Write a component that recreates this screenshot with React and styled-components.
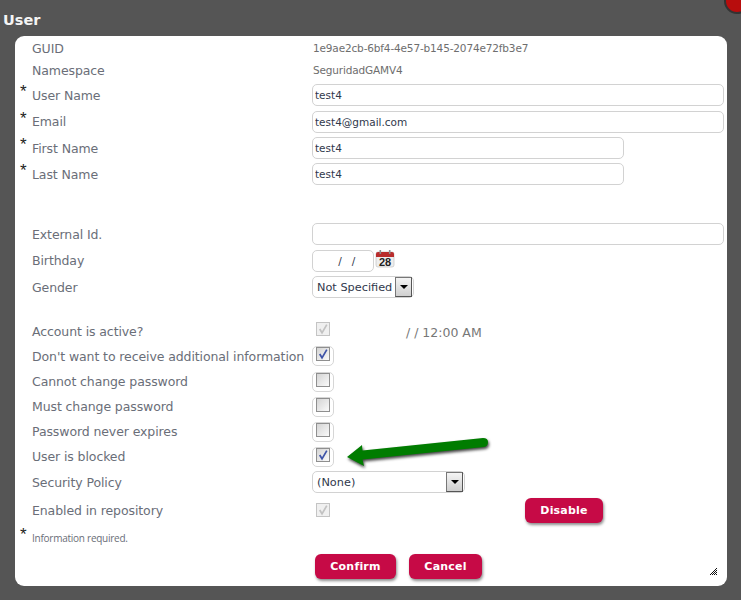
import React from "react";
import styled, { createGlobalStyle } from "styled-components";

const Global = createGlobalStyle`
  html, body { margin: 0; padding: 0; background: #555555; }
  body { width: 741px; height: 600px; overflow: hidden; }
`;

const font = `"DejaVu Sans", Verdana, sans-serif`;

const Page = styled.div`
  position: relative;
  width: 741px;
  height: 600px;
  background: #555555;
  font-family: ${font};
  overflow: hidden;
`;
const Title = styled.h1`
  margin: 0;
  height: 36px;
  padding: 11px 0 0 3px;
  box-sizing: border-box;
  font-size: 14.5px;
  line-height: 18px;
  font-weight: bold;
  color: #f4f4f4;
`;
const CloseDot = styled.div`
  position: absolute;
  top: -12px;
  right: -9px;
  width: 22px;
  height: 22px;
  border-radius: 50%;
  background: #b80d0d;
  border: 2px solid #333;
`;
const Panel = styled.div`
  position: relative;
  width: 712px;
  height: 550px;
  margin-left: 15px;
  background: #fff;
  border-radius: 9px;
`;
const Row = styled.div`
  display: flex;
  align-items: center;
  height: ${(p) => p.$h}px;
  padding-left: 5px;
`;
const Gap = styled.div`
  height: ${(p) => p.$h}px;
`;
const Star = styled.span`
  width: 12px;
  align-self: center;
  margin-top: -6px;
  font-size: 17px;
  line-height: 14px;
  color: #222;
  font-family: "Liberation Sans", sans-serif;
`;
const Label = styled.label`
  width: 280px;
  margin-top: 1px;
  font-size: 12.5px;
  line-height: 16px;
  color: #6a6e78;
  white-space: nowrap;
  letter-spacing: -0.1px;
  flex-shrink: 0;
`;
const Plain = styled.span`
  font-size: 10.5px;
  color: #6e6e6e;
  letter-spacing: -0.15px;
  margin-left: 1px;
`;
const Field = styled.input`
  box-sizing: border-box;
  width: ${(p) => p.$w}px;
  height: 22px;
  padding: 0 1px 0 2px;
  border: 1px solid #d2d2d2;
  border-radius: 5px;
  background: #fff;
  font-family: ${font};
  font-size: 10.5px;
  color: #30384c;
  outline: none;
  text-align: ${(p) => p.$align || "left"};
`;
const Calendar = styled.svg`
  width: 20px;
  height: 20px;
  margin: -4px 0 0 1px;
`;
const SelectBox = styled.div`
  box-sizing: border-box;
  width: ${(p) => p.$w}px;
  height: 22px;
  display: flex;
  align-items: center;
  justify-content: space-between;
  padding: 0 1px 0 4px;
  border: 1px solid #d2d2d2;
  border-radius: 5px;
  font-size: 11.3px;
  color: #30384c;
  white-space: nowrap;
`;
const SelectArrow = styled.span`
  box-sizing: border-box;
  width: 17px;
  height: 20px;
  display: flex;
  align-items: center;
  justify-content: center;
  border: 1px solid #555;
  border-left-color: #777;
  border-top-color: #777;
  background: linear-gradient(#f4f4f4, #cfcfcf);
  &::after {
    content: "";
    border-left: 4px solid transparent;
    border-right: 4px solid transparent;
    border-top: 4px solid #000;
  }
`;
const CheckWrap = styled.span`
  box-sizing: border-box;
  width: 22px;
  height: 20px;
  display: flex;
  align-items: flex-start;
  justify-content: center;
  border: 1px solid #d6d6d6;
  border-radius: 5px;
`;
const CheckBare = styled.span`
  width: 22px;
  height: 20px;
  margin-bottom: ${(p) => p.$lift * 2}px;
  display: flex;
  align-items: center;
  justify-content: center;
`;
const Box = styled.span`
  box-sizing: border-box;
  width: 14px;
  height: 14px;
  display: flex;
  align-items: center;
  justify-content: center;
  border: 1px solid ${(p) => (p.$off ? "#c4c4c4" : "#8f8f8f")};
  background: ${(p) => (p.$off ? "#f0f0f0" : "linear-gradient(135deg, #d4d4d4, #fafafa)")};
`;
const Stamp = styled.span`
  margin-left: 72px;
  margin-top: 2px;
  font-size: 12.5px;
  color: #777;
`;
const Button = styled.button`
  box-sizing: border-box;
  width: ${(p) => p.$w}px;
  height: 25px;
  padding: 0;
  border: none;
  border-radius: 6px;
  background: #c60a46;
  box-shadow: 1px 2px 3px rgba(0, 0, 0, 0.45);
  color: #fff;
  font-family: ${font};
  font-size: 11px;
  font-weight: bold;
  letter-spacing: 0.2px;
`;
const DisableSlot = styled.div`
  margin-left: 191px;
`;
const Note = styled.span`
  font-size: 10px;
  color: #6a6e78;
  letter-spacing: -0.25px;
  font-family: "Open Sans", sans-serif;
`;
const Actions = styled.div`
  display: flex;
  gap: 13px;
  padding: 4px 0 0 300px;
`;
const Grip = styled.svg`
  position: absolute;
  right: 10px;
  bottom: 11px;
  width: 8px;
  height: 8px;
`;
const Arrow = styled.svg`
  position: absolute;
  left: 340px;
  top: 430px;
  width: 156px;
  height: 44px;
  filter: drop-shadow(1px 2px 1.5px rgba(0, 0, 0, 0.75));
`;

const Tick = ({ off }) => (
  <svg width="12" height="12" viewBox="0 0 11 11">
    <path
      d="M2.5 5.5 L4.6 9 L9 1.5"
      fill="none"
      stroke={off ? "#c2c2c2" : "#3f54a8"}
      strokeWidth="1.6"
    />
  </svg>
);

const Check = ({ on }) => (
  <CheckWrap>
    <Box>{on && <Tick />}</Box>
  </CheckWrap>
);

const DisabledCheck = ({ lift }) => (
  <CheckBare $lift={lift}>
    <Box $off>
      <Tick off />
    </Box>
  </CheckBare>
);

export default function App() {
  return (
    <Page>
      <Global />
      <Title>User</Title>
      <CloseDot />
      <Panel>
        <Row $h={24}>
          <Star />
          <Label>GUID</Label>
          <Plain>1e9ae2cb-6bf4-4e57-b145-2074e72fb3e7</Plain>
        </Row>
        <Row $h={20}>
          <Star />
          <Label>Namespace</Label>
          <Plain>SeguridadGAMV4</Plain>
        </Row>
        <Gap $h={2} />
        <Row $h={26}>
          <Star>*</Star>
          <Label>User Name</Label>
          <Field $w={412} defaultValue="test4" />
        </Row>
        <Row $h={27}>
          <Star>*</Star>
          <Label>Email</Label>
          <Field $w={412} defaultValue="test4@gmail.com" />
        </Row>
        <Row $h={26}>
          <Star>*</Star>
          <Label>First Name</Label>
          <Field $w={312} defaultValue="test4" />
        </Row>
        <Row $h={26}>
          <Star>*</Star>
          <Label>Last Name</Label>
          <Field $w={312} defaultValue="test4" />
        </Row>
        <Gap $h={34} />
        <Row $h={26}>
          <Star />
          <Label>External Id.</Label>
          <Field $w={412} />
        </Row>
        <Row $h={27}>
          <Star />
          <Label>Birthday</Label>
          <Field $w={62} $align="center" defaultValue="  /   /" />
          <Calendar viewBox="0 0 20 20">
            <rect x="1" y="3" width="18" height="15" rx="2" fill="#eeeeee" stroke="#bbbbbb" strokeWidth="0.6" />
            <path d="M1 8 V5 a2 2 0 0 1 2-2 H17 a2 2 0 0 1 2 2 V8 Z" fill="#b92c2c" />
            <rect x="4.5" y="1" width="1.6" height="4" fill="#8c8c8c" />
            <rect x="13.9" y="1" width="1.6" height="4" fill="#8c8c8c" />
            <text x="10" y="17" textAnchor="middle" fontSize="11" fontWeight="bold" fontFamily="Liberation Sans" fill="#222">28</text>
          </Calendar>
        </Row>
        <Row $h={26}>
          <Star />
          <Label>Gender</Label>
          <SelectBox $w={102}>
            Not Specified
            <SelectArrow />
          </SelectBox>
        </Row>
        <Gap $h={19} />
        <Row $h={24}>
          <Star />
          <Label>Account is active?</Label>
          <DisabledCheck lift={2} />
          <Stamp>/ / 12:00 AM</Stamp>
        </Row>
        <Row $h={26}>
          <Star />
          <Label>Don't want to receive additional information</Label>
          <Check on />
        </Row>
        <Row $h={25}>
          <Star />
          <Label>Cannot change password</Label>
          <Check />
        </Row>
        <Row $h={25}>
          <Star />
          <Label>Must change password</Label>
          <Check />
        </Row>
        <Row $h={25}>
          <Star />
          <Label>Password never expires</Label>
          <Check />
        </Row>
        <Row $h={25}>
          <Star />
          <Label>User is blocked</Label>
          <Check on />
        </Row>
        <Row $h={26}>
          <Star />
          <Label>Security Policy</Label>
          <SelectBox $w={153}>
            (None)
            <SelectArrow />
          </SelectBox>
        </Row>
        <Row $h={31}>
          <Star />
          <Label>Enabled in repository</Label>
          <DisabledCheck lift={1} />
          <DisableSlot>
            <Button $w={78}>Disable</Button>
          </DisableSlot>
        </Row>
        <Row $h={24}>
          <Star>*</Star>
          <Note>Information required.</Note>
        </Row>
        <Actions>
          <Button $w={81}>Confirm</Button>
          <Button $w={73}>Cancel</Button>
        </Actions>
        <Grip viewBox="0 0 8 8" shapeRendering="crispEdges">
          <path d="M7 1h1v1h-1zM6 2h1v1h-1zM5 3h1v1h-1zM7 3h1v1h-1zM4 4h1v1h-1zM6 4h1v1h-1zM3 5h1v1h-1zM5 5h1v1h-1zM7 5h1v1h-1zM2 6h1v1h-1zM4 6h1v1h-1zM6 6h1v1h-1zM1 7h1v1h-1zM3 7h1v1h-1zM5 7h1v1h-1zM7 7h1v1h-1z" fill="#111" />
        </Grip>
      </Panel>
      <Arrow viewBox="340 430 156 44">
        <path
          d="M347 457 L362 445 L362.5 450.5 L483 438 Q488 438 488 442 Q488 446.5 484 447 L362.5 459.5 L364 466 Z"
          fill="#007c00"
        />
      </Arrow>
    </Page>
  );
}
